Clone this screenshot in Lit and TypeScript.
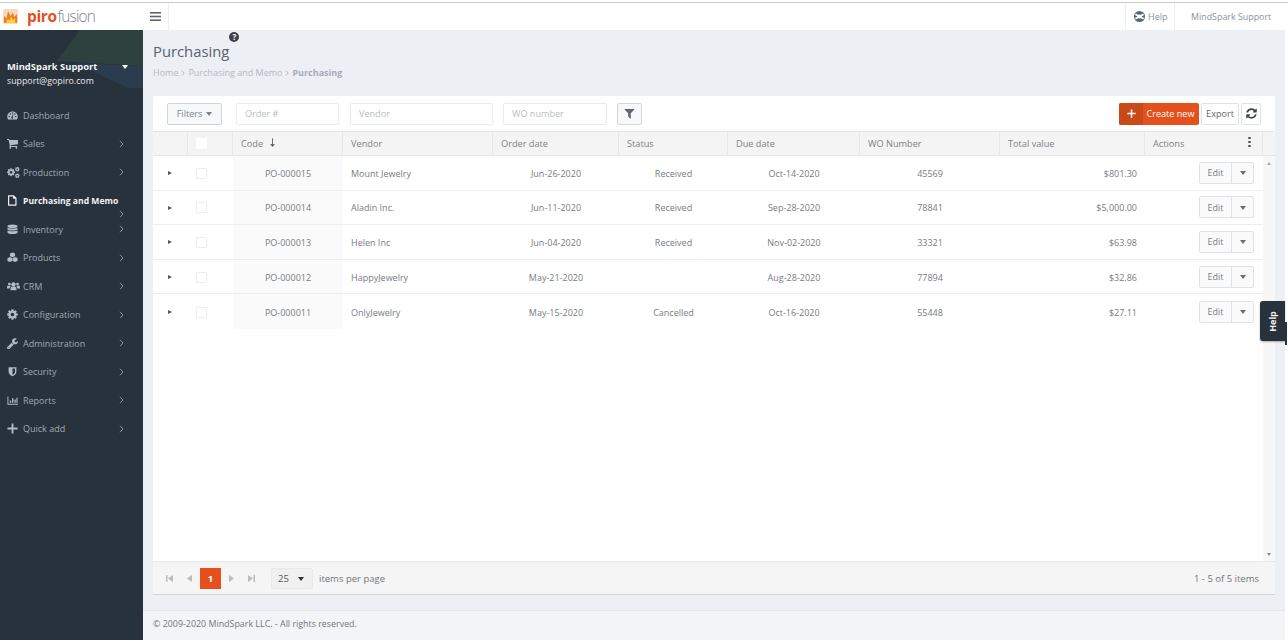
import { LitElement, html, css, svg } from "lit";
import { customElement } from "lit/decorators.js";

const COG = "M1152 896q0-106-75-181t-181-75-181 75-75 181 75 181 181 75 181-75 75-181zm512-109v222q0 12-8 23t-20 13l-185 28q-19 54-39 91 35 50 107 138 10 12 10 25t-9 23q-27 37-99 108t-94 71q-12 0-26-9l-138-108q-44 23-91 38-16 136-29 186-7 28-36 28h-222q-14 0-24.5-8.5t-11.5-21.5l-28-184q-49-16-90-37l-141 107q-10 9-25 9-14 0-25-11-126-114-165-168-7-10-7-23 0-12 8-23 15-21 51-66.5t54-70.5q-27-50-41-99l-183-27q-13-2-21-12.5t-8-23.5v-222q0-12 8-23t19-13l186-28q14-46 39-92-40-57-107-138-10-12-10-24 0-10 9-23 26-36 98.5-107.5t94.5-71.5q13 0 26 10l138 107q44-23 91-38 16-136 29-186 7-28 36-28h222q14 0 24.5 8.5t11.5 21.5l28 184q49 16 90 37l142-107q9-9 24-9 13 0 25 10 129 119 165 170 7 8 7 22 0 12-8 23-15 21-51 66.5t-54 70.5q26 50 41 98l183 28q13 2 21 12.5t8 23.5z";
const CART = "M704 1536q0 52-38 90t-90 38-90-38-38-90 38-90 90-38 90 38 38 90zm896 0q0 52-38 90t-90 38-90-38-38-90 38-90 90-38 90 38 38 90zm128-1088v512q0 24-16.5 42.5t-40.5 21.5l-1044 122q13 60 13 70 0 16-24 64h920q26 0 45 19t19 45-19 45-45 19h-1024q-26 0-45-19t-19-45q0-11 8-31.5t16-36 21.5-40 15.5-29.5l-177-823h-204q-26 0-45-19t-19-45 19-45 45-19h256q16 0 28.5 6.5t19.5 15.5 13 24.5 8 26 5.5 29.5 4.5 26h1201q26 0 45 19t19 45z";
const WRENCH = "M448 1472q0-26-19-45t-45-19-45 19-19 45 19 45 45 19 45-19 19-45zm644-420l-682 682q-37 37-90 37-52 0-91-37l-106-108q-38-36-38-90 0-53 38-91l681-681q39 98 114.5 173.5t173.5 114.5zm634-435q0 39-23 106-47 134-164.5 217.5t-258.5 83.5q-185 0-316.5-131.5t-131.5-316.5 131.5-316.5 316.5-131.5q58 0 121.5 16.5t107.5 46.5q16 11 16 28t-16 28l-293 169v224l193 107q5-3 79-48.5t135.5-81 70.5-35.5q15 0 23.5 10t8.5 25z";
const FILTER = "M1595 295q17 41-14 70l-493 493v742q0 42-39 59-13 5-25 5-27 0-45-19l-256-256q-19-19-19-45v-486l-493-493q-31-29-14-70 17-39 59-39h1280q42 0 59 39z";
const REFRESH = "M1639 1056q0 5-1 7-64 268-268 434.5t-478 166.5q-146 0-282.5-55t-243.5-157l-129 129q-19 19-45 19t-45-19-19-45v-448q0-26 19-45t45-19h448q26 0 45 19t19 45-19 45l-137 137q71 66 161 102t187 36q134 0 250-65t186-179q11-17 53-117 8-23 30-23h192q13 0 22.5 9.5t9.5 22.5zm25-800v448q0 26-19 45t-45 19h-448q-26 0-45-19t-19-45 19-45l138-138q-148-137-349-137-134 0-250 65t-186 179q-11 17-53 117-8 23-30 23h-199q-13 0-22.5-9.5t-9.5-22.5v-7q65-268 270-434.5t480-166.5q146 0 284 55.5t245 156.5l130-129q19-19 45-19t45 19 19 45z";

const fa = (d: string) => svg`<svg class="ic" viewBox="100 100 1600 1600" fill="currentColor"><path d=${d}></path></svg>`;

const ICONS: Record<string, unknown> = {
  dashboard: svg`<svg class="ic" viewBox="0 0 24 24" fill="currentColor"><path fill-rule="evenodd" d="M12 3C5.500 3 .5 8 .5 14.500c0 2 .5 4 1.500 5.500.3.400.7.500 1.100.500h17.800c.4 0 .8-.1 1.100-.5 1-1.500 1.500-3.500 1.500-5.500C23.500 8 18.500 3 12 3zM5 16a1.600 1.600 0 1 1 0-3.200A1.600 1.600 0 0 1 5 16zm2.200-5.800a1.600 1.600 0 1 1 0-3.200 1.600 1.600 0 0 1 0 3.200zM12 8a1.600 1.600 0 1 1 0-3.200A1.600 1.600 0 0 1 12 8zm1.600 9.500a2.300 2.300 0 1 1-3-3l2.200-5.500 1.400.5-1.700 5.400c.5.500 1 1.600 1.100 2.600zM16.800 10.200a1.600 1.600 0 1 1 0-3.200 1.600 1.600 0 0 1 0 3.200zM19 16a1.600 1.600 0 1 1 0-3.200 1.600 1.600 0 0 1 0 3.200z"></path></svg>`,
  cart: fa(CART),
  cogs: svg`<svg class="ic wide" viewBox="0 0 24 24" fill="currentColor"><svg x="-1" y="3" width="17" height="17" viewBox="0 0 1792 1792"><path d=${COG}></path></svg><svg x="14" y="1" width="10" height="10" viewBox="0 0 1792 1792"><path d=${COG}></path></svg><svg x="14" y="13" width="10" height="10" viewBox="0 0 1792 1792"><path d=${COG}></path></svg></svg>`,
  file: svg`<svg class="ic" viewBox="0 0 24 24" fill="none" stroke="currentColor" stroke-width="2.600" stroke-linejoin="round"><path d="M3.500 2h11l5 5v15h-16zM14.500 2v5h5"></path></svg>`,
  database: svg`<svg class="ic" viewBox="0 0 24 24" fill="currentColor"><ellipse cx="12" cy="5" rx="11" ry="3.800"></ellipse><path d="M1 8c2 2.400 20 2.400 22 0v3.500c-1 3.500-21 3.500-22 0zM1 14c2 2.400 20 2.400 22 0v4.500c-1 4.500-21 4.500-22 0z"></path></svg>`,
  cubes: svg`<svg class="ic" viewBox="0 0 24 24" fill="currentColor"><path d="M12 1l5.500 2.200v6L12 11.500 6.500 9.200v-6zM6.500 11l5 2.200v6.300l-5 2.500-5.500-2.500v-6zM17.500 11l5.500 2v6.500L17.500 22l-5-2.500v-6.300z"></path></svg>`,
  users: svg`<svg class="ic wide" viewBox="0 0 24 24" fill="currentColor"><circle cx="12" cy="8" r="4"></circle><circle cx="4.500" cy="7.500" r="2.600"></circle><circle cx="19.500" cy="7.500" r="2.600"></circle><path d="M6.500 19v-2.500c0-3 2-4.500 3.500-4.500h4c1.500 0 3.500 1.500 3.500 4.500V19zM0 15.500V13c0-1.500 1-2.500 2-2.500h3.500c.5.500.5 1 1.500 1.500-1.500 1-2 2.500-2 3.500zM24 15.500V13c0-1.500-1-2.500-2-2.500h-3.500c-.5.500-.5 1-1.500 1.500 1.500 1 2 2.500 2 3.500z"></path></svg>`,
  cog: fa(COG),
  wrench: fa(WRENCH),
  shield: svg`<svg class="ic" viewBox="0 0 24 24" fill="currentColor"><path fill-rule="evenodd" d="M3.500 2.500h17v10c0 5-4 8-8.500 10-4.500-2-8.500-5-8.500-10zM12 5.500v13.500c3-1.500 5.500-3.500 5.500-6.500v-7z"></path></svg>`,
  chart: svg`<svg class="ic" viewBox="0 0 24 24" fill="currentColor"><path d="M1 3h2v16h21v2H1zM6 12h3v5H6zM11 7h3v10h-3zM16 10h3v7h-3zM20.500 6h2.500v11h-2.500z"></path></svg>`,
  plus: svg`<svg class="ic" viewBox="0 0 24 24" fill="currentColor"><path d="M10 1h4v9h9v4h-9v9h-4v-9H1v-4h9z"></path></svg>`,
};

const NAV = [
  { label: "Dashboard", icon: "dashboard" },
  { label: "Sales", icon: "cart", more: true },
  { label: "Production", icon: "cogs", more: true },
  { label: "Purchasing and Memo", icon: "file", more: true, active: true },
  { label: "Inventory", icon: "database", more: true },
  { label: "Products", icon: "cubes", more: true },
  { label: "CRM", icon: "users", more: true },
  { label: "Configuration", icon: "cog", more: true },
  { label: "Administration", icon: "wrench", more: true },
  { label: "Security", icon: "shield", more: true },
  { label: "Reports", icon: "chart", more: true },
  { label: "Quick add", icon: "plus", more: true },
];

const HEAD = ["", "", "Code", "Vendor", "Order date", "Status", "Due date", "WO Number", "Total value", "Actions"];

const ROWS = [
  ["PO-000015", "Mount Jewelry", "Jun-26-2020", "Received", "Oct-14-2020", "45569", "$801.30"],
  ["PO-000014", "Aladin Inc.", "Jun-11-2020", "Received", "Sep-28-2020", "78841", "$5,000.00"],
  ["PO-000013", "Helen Inc", "Jun-04-2020", "Received", "Nov-02-2020", "33321", "$63.98"],
  ["PO-000012", "HappyJewelry", "May-21-2020", "", "Aug-28-2020", "77894", "$32.86"],
  ["PO-000011", "OnlyJewelry", "May-15-2020", "Cancelled", "Oct-16-2020", "55448", "$27.11"],
];

@customElement("app-root")
export class AppRoot extends LitElement {
  static styles = css`
    :host { display: flex; flex-direction: column; width: 1288px; height: 640px; overflow: hidden; position: relative;
      font-family: "Open Sans", sans-serif; font-size: 9.100px; color: #6b7078; background: #fff; }
    * { box-sizing: border-box; }
    .ic { width: 100%; height: 100%; display: block; }

    .topbar { flex: none; display: flex; align-items: stretch; background: #fff; border-top: 1px solid #cfcfcf; margin-top: 2px; height: 28px; }
    .logo { width: 143px; display: flex; align-items: center; padding-left: 3px; gap: 9px; }
    .flame { width: 15px; height: 15px; flex: none; }
    .brand { font-size: 15.500px; line-height: 1; display: flex; }
    .brand b { color: #e0501e; font-weight: 700; letter-spacing: -0.400px; }
    .brand span { color: #7d8590; font-weight: 300; letter-spacing: -0.900px; margin-left: 1px; }
    .burger { width: 26px; display: flex; align-items: center; justify-content: center; border-right: 1px solid #eef0f3; color: #5b6670; }
    .burger svg { width: 11px; height: 9px; }
    .spacer { flex: 1; }
    .help { display: flex; align-items: center; gap: 3px; width: 50px; padding-left: 8px; border-left: 1px solid #eef0f3; border-right: 1px solid #eef0f3; color: #8b929b; font-size: 9px; }
    .help svg { width: 11px; height: 11px; flex: none; }
    .who { width: 113px; display: flex; align-items: center; padding-left: 16px; color: #8b929b; font-size: 8.900px; }

    .body { flex: 1; display: flex; min-height: 0; }
    .side { width: 143px; flex: none; background: #28323c; color: #a0a8b1; position: relative; overflow: hidden; }
    .deco { position: absolute; left: 0; top: 0; width: 143px; height: 90px; }
    .profile { position: relative; height: 71px; padding: 30px 7px 0; display: flex; justify-content: space-between; color: #fff; }
    .profile .name { font-weight: 700; font-size: 9.400px; line-height: 14px; color: #f2f3f5; }
    .profile .mail { font-size: 8.800px; line-height: 14px; color: #e7e9ec; }
    .caret-w { width: 0; height: 0; border: 3.500px solid transparent; border-top: 4px solid #fff; border-bottom: 0; margin: 5px 8px 0 0; }
    .nav { position: relative; display: flex; flex-direction: column; }
    .item { height: 28.500px; display: flex; align-items: center; padding-left: 7px; }
    .item .i { width: 11px; height: 11px; margin-right: 5px; flex: none; color: #b4bbc3; }
    .item .i .wide { width: 13px; height: 13px; margin-top: -1px; }
    .item .l { flex: 1; min-width: 0; font-size: 9px; white-space: nowrap; }
    .item .chev { width: 5px; height: 8px; margin-right: 19px; flex: none; color: #8a929b; }
    .item.active .l { color: #f0f2f4; font-weight: 700; font-size: 8.600px; }
    .item.active .i { color: #f0f2f4; }
    .item.active .chev { transform: translateY(13px); }

    .main { flex: 1; display: flex; flex-direction: column; background: #eceff4; min-width: 0; }
    .head { height: 66px; padding: 0 10px; flex: none; }
    .title-row { display: flex; padding-top: 13px; height: 37px; align-items: flex-start; }
    h1 { margin: 0; font-weight: 400; font-size: 14.800px; line-height: 17px; color: #59626f; }
    .q { width: 10px; height: 10px; margin: -11px 0 0 0; border-radius: 50%; background: #3c4148; color: #fff; font-size: 8px; font-weight: 700; line-height: 10px; text-align: center; }
    .crumbs { display: flex; align-items: center; gap: 3px; color: #b3bac5; font-size: 9px; line-height: 12px; }
    .crumbs b { font-weight: 700; color: #a4acb8; }
    .crumbs svg { width: 4px; height: 6px; color: #b3bac5; }

    .panel { margin: 0 10px; height: 499px; flex: none; background: #fff; display: flex; flex-direction: column; border-bottom: 1px solid #d4d6d9; border-radius: 2px 2px 0 0; }
    .tools { height: 35px; flex: none; display: flex; align-items: center; padding: 0 14px; }
    .btn { height: 22px; display: flex; align-items: center; justify-content: center; background: #fff; border: 1px solid #dfe3e8; border-radius: 2px; color: #6d747d; font-size: 9.100px; }
    .filters { width: 55px; background: #f7f8f9; border-color: #cfd4da; gap: 4px; color: #7b828b; }
    .caret { width: 0; height: 0; border: 3px solid transparent; border-top: 4px solid currentColor; border-bottom: 0; margin-top: 1px; }
    .inp { height: 22px; display: flex; align-items: center; padding-left: 8px; border: 1px solid #e8ebef; border-radius: 2px; color: #b9bec6; font-size: 9.100px; background: #fff; }
    .w1 { width: 103px; margin-left: 14px; }
    .w2 { width: 143px; margin-left: 11px; }
    .w3 { width: 104px; margin-left: 10px; }
    .fbtn { width: 25px; margin-left: 10px; background: #f7f8f9; border-color: #d5d9de; color: #5f6973; }
    .fbtn svg, .ref svg { width: 11px; height: 11px; }
    .create { width: 80px; margin-left: auto; display: flex; height: 22px; border-radius: 2px; overflow: hidden; color: #fff; background: #e4511c; font-size: 9.100px; }
    .create .pl { width: 24px; background: #c94a18; display: flex; align-items: center; justify-content: center; }
    .create .pl svg { width: 9px; height: 9px; }
    .create .tx { flex: 1; display: flex; align-items: center; justify-content: center; padding-right: 1px; }
    .export { width: 38px; margin-left: 2px; color: #5f6670; }
    .ref { width: 20px; margin-left: 2px; color: #3d4650; }

    .thead, .row { display: grid; grid-template-columns: 35px 45px 110px 150px 126px 109px 132px 140px 145px 118px; }
    .thead { grid-template-columns: 35px 45px 110px 150px 126px 109px 132px 140px 145px 118px 12px; height: 25px; flex: none; background: #f4f4f4; border-top: 1px solid #e6e6e6; border-bottom: 1px solid #e6e6e6; color: #7d8187; font-size: 9.200px; }
    .th { display: flex; align-items: center; padding-left: 8px; border-right: 1px solid #e7e7e7; }
    .th .sort { width: 5px; height: 9px; margin-left: 7px; color: #555; margin-top: -3px; }
    .kebab { margin-left: auto; margin-right: 11px; width: 3px; display: flex; flex-direction: column; gap: 1.500px; margin-top: -3px; }
    .kebab i { display: block; width: 2.500px; height: 2.500px; background: #555; border-radius: 50%; }
    .cb { width: 11px; height: 11px; background: #fff; border: 1px solid #eee; border-radius: 1px; }
    .th.chk .cb { border-color: #fff; }

    .tbody-wrap { flex: 1; display: flex; min-height: 0; }
    .tbody { flex: 1; }
    .row { height: 34.600px; border-bottom: 1px solid #eeeeee; color: #777c83; font-size: 9px; }
    .row:last-child { border-bottom: 0; }
    .c { display: flex; align-items: center; padding-top: 1px; }
    .c.code { background: #fafafa; justify-content: center; }
    .c.ctr { justify-content: center; }
    .c.left { padding-left: 8px; }
    .c.right { justify-content: flex-end; padding-right: 8px; }
    .c.exp { padding-left: 15px; }
    .c.chk { padding-left: 8px; }
    .tri { width: 0; height: 0; border: 2.500px solid transparent; border-left: 4px solid #555; border-right: 0; }
    .c.acts { justify-content: flex-end; padding: 0 9px 0 0; }
    .grp { display: flex; height: 22px; border: 1px solid #dfe2e6; border-radius: 2px; background: #fafafa; color: #7a8088; }
    .grp span { width: 32px; display: flex; align-items: center; justify-content: center; border-right: 1px solid #dfe2e6; }
    .grp div { width: 21px; display: flex; align-items: center; justify-content: center; color: #666d75; }
    .scroll { width: 12px; flex: none; background: #f7f7f7; display: flex; flex-direction: column; justify-content: space-between; align-items: center; padding: 6px 0 5px; }
    .up, .dn { width: 0; height: 0; border: 2.500px solid transparent; }
    .up { border-bottom: 3px solid #aaa; border-top: 0; }
    .dn { border-top: 3px solid #888; border-bottom: 0; }

    .pager { height: 33px; flex: none; display: flex; align-items: center; background: #f5f5f5; border-top: 1px solid #e8e8e8; padding-left: 13px; padding-right: 16px; color: #71767d; font-size: 9.500px; }
    .pg { width: 7px; height: 7px; color: #b9bcc1; flex: none; }
    .p1 { margin-right: 13px; }
    .p2 { margin-right: 7px; }
    .cur { width: 21px; height: 21px; display: flex; align-items: center; justify-content: center; background: #e4511c; color: #fff; font-weight: 700; font-size: 9.500px; margin-right: 7px; }
    .p3 { margin-right: 13px; }
    .sel { width: 42px; height: 21px; margin-left: 16px; margin-right: 6px; display: flex; align-items: center; justify-content: space-between; padding: 0 8px 0 6px; background: #f0f0f0; border: 1px solid #e9e9e9; border-radius: 2px; color: #555; }
    .sel .caret { color: #333; }
    .count { margin-left: auto; }

    .foot-gap { flex: 1; }
    .foot { height: 30px; flex: none; background: #f3f4f8; border-top: 1px solid #e6e8ec; display: flex; align-items: center; padding: 0 0 4px 10px; color: #71767d; font-size: 8.900px; }

    .edge { width: 3px; flex: none; background: #fff; }
    .tab { position: absolute; left: 1260px; top: 301px; width: 25px; height: 40px; background: #28323c; border-radius: 3px 0 0 3px; display: flex; align-items: center; justify-content: center; box-shadow: 0 1px 2px rgba(0,0,0,.3); }
    .tab span { color: #f0f2f4; font-weight: 700; font-size: 9px; transform: rotate(-90deg); }
    .tab-tail { position: absolute; left: 1285px; top: 322px; width: 2px; height: 23px; background: #28323c; }
  `;

  private chevron() {
    return svg`<svg class="chev" viewBox="0 0 5 8" fill="none" stroke="currentColor" stroke-width="1"><path d="M1 .8L4 4 1 7.200"></path></svg>`;
  }

  private crumbSep() {
    return svg`<svg viewBox="0 0 4 6" fill="none" stroke="currentColor" stroke-width="1"><path d="M.8.500L3.200 3 .8 5.500"></path></svg>`;
  }

  private pg(d: string, cls: string) {
    return svg`<svg class="pg ${cls}" viewBox="0 0 7 7" fill="currentColor"><path d=${d}></path></svg>`;
  }

  render() {
    return html`
      <div class="topbar">
        <div class="logo">
          <svg class="flame" viewBox="0 0 15 15">
            <rect width="15" height="15" rx="2" fill="#f8d9c2"></rect>
            <path d="M1 14V7l2.500 2.500L5 2l2.500 5L10 3.500 11 8l3-3v9z" fill="#ef7d1a"></path>
            <path d="M3 14l1.500-4 2 1.500L8 7.500 10 11l2-2 .5 5z" fill="#fbd23e"></path>
          </svg>
          <div class="brand"><b>piro</b><span>fusion</span></div>
        </div>
        <div class="burger">
          <svg viewBox="0 0 11 9" fill="currentColor"><rect width="11" height="1.600" y="0"></rect><rect width="11" height="1.600" y="3.700"></rect><rect width="11" height="1.600" y="7.400"></rect></svg>
        </div>
        <div class="spacer"></div>
        <div class="help">
          <svg viewBox="0 0 24 24">
            <circle cx="12" cy="12" r="12" fill="#5a6672"></circle>
            <path d="M3 7l6 3.500M21 7l-6 3.500M3 17l6-3.500M21 17l-6-3.500" stroke="#fff" stroke-width="4"></path>
            <circle cx="12" cy="12" r="4.500" fill="#fff"></circle>
          </svg>
          Help
        </div>
        <div class="who">MindSpark Support</div>
      </div>
      <div class="body">
        <aside class="side">
          <svg class="deco" viewBox="0 0 143 90" preserveAspectRatio="none">
            <path d="M80 0h63v36L57 31z" fill="#2e413f"></path>
            <path d="M75 33l68 3v22h-15z" fill="#2a3c4e"></path>
          </svg>
          <div class="profile">
            <div>
              <div class="name">MindSpark Support</div>
              <div class="mail">support@gopiro.com</div>
            </div>
            <div class="caret-w"></div>
          </div>
          <nav class="nav">
            ${NAV.map(
              (n) => html`
                <div class="item ${n.active ? "active" : ""}">
                  <div class="i">${ICONS[n.icon]}</div>
                  <div class="l">${n.label}</div>
                  ${n.more ? this.chevron() : ""}
                </div>
              `
            )}
          </nav>
        </aside>
        <main class="main">
          <div class="head">
            <div class="title-row"><h1>Purchasing</h1><div class="q">?</div></div>
            <div class="crumbs">
              <span>Home</span>${this.crumbSep()}<span>Purchasing and Memo</span>${this.crumbSep()}<b>Purchasing</b>
            </div>
          </div>
          <section class="panel">
            <div class="tools">
              <div class="btn filters">Filters <span class="caret"></span></div>
              <div class="inp w1">Order #</div>
              <div class="inp w2">Vendor</div>
              <div class="inp w3">WO number</div>
              <div class="btn fbtn">${fa(FILTER)}</div>
              <div class="create">
                <div class="pl">${ICONS.plus}</div>
                <div class="tx">Create new</div>
              </div>
              <div class="btn export">Export</div>
              <div class="btn ref">${fa(REFRESH)}</div>
            </div>
            <div class="thead">
              ${HEAD.map(
                (h, i) => html`
                  <div class="th ${i === 1 ? "chk" : ""}">
                    ${i === 1 ? html`<div class="cb"></div>` : h}
                    ${i === 2
                      ? svg`<svg class="sort" viewBox="0 0 6 10" fill="currentColor"><path d="M2.500 0h1v7H6L3 10 0 7h2.500z"></path></svg>`
                      : ""}
                    ${i === 9 ? html`<div class="kebab"><i></i><i></i><i></i></div>` : ""}
                  </div>
                `
              )}
              <div></div>
            </div>
            <div class="tbody-wrap">
              <div class="tbody">
                ${ROWS.map(
                  (r) => html`
                    <div class="row">
                      <div class="c exp"><span class="tri"></span></div>
                      <div class="c chk"><div class="cb"></div></div>
                      <div class="c code">${r[0]}</div>
                      <div class="c left">${r[1]}</div>
                      <div class="c ctr">${r[2]}</div>
                      <div class="c ctr">${r[3]}</div>
                      <div class="c ctr">${r[4]}</div>
                      <div class="c ctr">${r[5]}</div>
                      <div class="c right">${r[6]}</div>
                      <div class="c acts">
                        <div class="grp"><span>Edit</span><div><i class="caret"></i></div></div>
                      </div>
                    </div>
                  `
                )}
              </div>
              <div class="scroll"><i class="up"></i><i class="dn"></i></div>
            </div>
            <div class="pager">
              ${this.pg("M0 0h1.500v7H0zM7 0v7L2 3.500z", "p1")}
              ${this.pg("M6 0v7L1 3.500z", "p2")}
              <div class="cur">1</div>
              ${this.pg("M1 0v7l5-3.500z", "p3")}
              ${this.pg("M0 0v7l5-3.500zM5.500 0H7v7H5.500z", "")}
              <div class="sel">25 <span class="caret"></span></div>
              <span>items per page</span>
              <span class="count">1 - 5 of 5 items</span>
            </div>
          </section>
          <div class="foot-gap"></div>
          <footer class="foot">© 2009-2020 MindSpark LLC. - All rights reserved.</footer>
        </main>
        <div class="edge"></div>
      </div>
      <div class="tab"><span>Help</span></div>
      <div class="tab-tail"></div>
    `;
  }
}
